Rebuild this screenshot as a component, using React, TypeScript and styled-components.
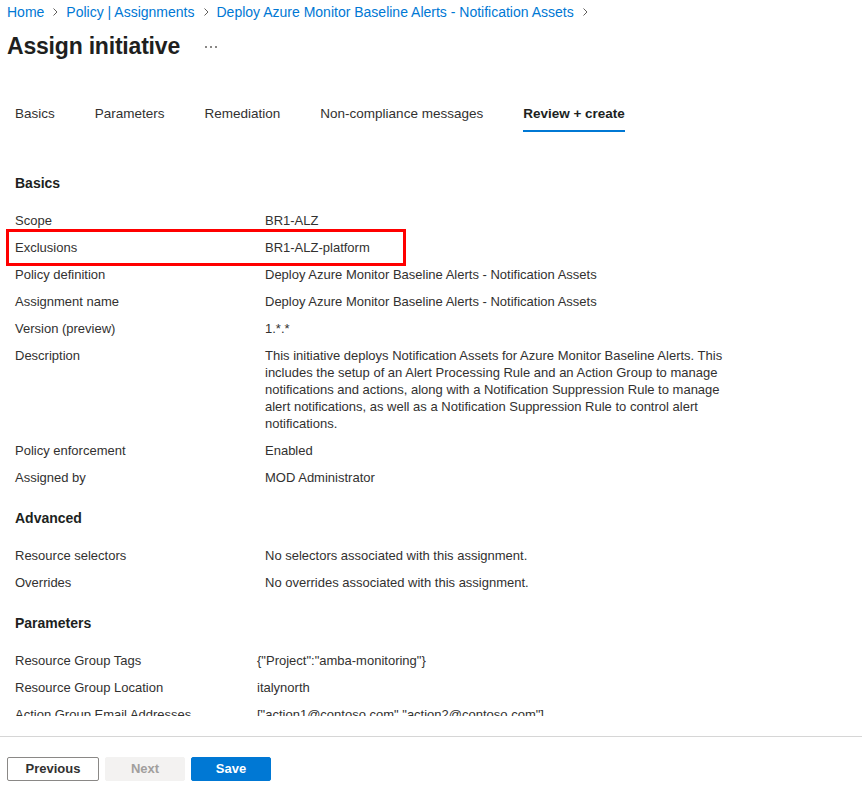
import React from "react";
import styled, { createGlobalStyle } from "styled-components";

const Global = createGlobalStyle`
  html, body { margin: 0; padding: 0; background: #ffffff; }
  body { font-family: "Liberation Sans", Arial, sans-serif; color: #323130; }
  * { box-sizing: border-box; }
`;

const Page = styled.div`
  width: 862px;
  height: 787px;
  display: flex;
  flex-direction: column;
  overflow: hidden;
`;

const Breadcrumb = styled.nav`
  display: flex;
  align-items: center;
  gap: 7px;
  padding: 3px 0 0 7px;
  height: 21px;
  font-size: 14px;
  line-height: 18px;
`;

const Crumb = styled.a`
  color: #0078d4;
  text-decoration: none;
  white-space: nowrap;
`;

const Chevron = () => (
  <svg width="8" height="10" viewBox="0 0 8 10" aria-hidden="true">
    <path d="M2.5 1.5 L6 5 L2.5 8.5" fill="none" stroke="#605e5c" strokeWidth="1" />
  </svg>
);

const TitleRow = styled.div`
  display: flex;
  align-items: center;
  gap: 25px;
  padding: 11px 0 0 7px;
  height: 39px;
`;

const Title = styled.h1`
  margin: 0;
  font-size: 23px;
  line-height: 28px;
  font-weight: 600;
  color: #201f1e;
  letter-spacing: -0.2px;
`;

const More = styled.span`
  display: flex;
  gap: 3px;
  align-items: center;
  padding-top: 2px;
  & > i {
    width: 2px;
    height: 2px;
    background: #8a8886;
    display: block;
  }
`;

const Tabs = styled.div`
  display: flex;
  gap: 40px;
  padding: 45px 0 0 15px;
`;

const Tab = styled.div<{ $active?: boolean }>`
  font-size: 13.5px;
  line-height: 18px;
  padding-bottom: 7px;
  height: 27px;
  color: ${(p) => (p.$active ? "#201f1e" : "#323130")};
  font-weight: ${(p) => (p.$active ? 600 : 400)};
  border-bottom: 2px solid ${(p) => (p.$active ? "#0078d4" : "transparent")};
  white-space: nowrap;
`;

const Content = styled.main`
  flex: 1;
  overflow: hidden;
  padding: 0 0 0 15px;
  margin-bottom: 20px;
`;

const SectionTitle = styled.h2`
  margin: 0 0 14px;
  font-size: 14px;
  line-height: 20px;
  font-weight: 700;
  color: #201f1e;
`;

const Section = styled.section`
  padding-top: 17px;
  &:first-child {
    padding-top: 41px;
  }
`;

const Row = styled.div<{ $labelWidth: number }>`
  position: relative;
  display: grid;
  grid-template-columns: ${(p) => p.$labelWidth}px 460px;
  font-size: 13px;
  line-height: 17px;
  padding: 5px 0;
`;

const Label = styled.div`
  color: #323130;
  white-space: nowrap;
`;

const Value = styled.div`
  color: #323130;
`;

const Highlight = styled.div`
  position: absolute;
  left: -9px;
  top: -5px;
  width: 400px;
  height: 37px;
  border: 3px solid #ff0000;
  pointer-events: none;
`;

const Footer = styled.footer`
  border-top: 1px solid #d6d6d6;
  padding: 20px 7px 6px;
  display: flex;
  gap: 6px;
`;

const Button = styled.button<{ $variant: "default" | "disabled" | "primary" }>`
  height: 24px;
  font-family: inherit;
  font-size: 13px;
  line-height: 16px;
  font-weight: 600;
  border-radius: 2px;
  padding: 0;
  cursor: ${(p) => (p.$variant === "disabled" ? "default" : "pointer")};
  width: ${(p) => (p.$variant === "default" ? 92 : 80)}px;
  border: 1px solid
    ${(p) =>
      p.$variant === "default" ? "#8a8886" : p.$variant === "primary" ? "#0078d4" : "#f3f2f1"};
  background: ${(p) =>
    p.$variant === "primary" ? "#0078d4" : p.$variant === "disabled" ? "#f3f2f1" : "#ffffff"};
  color: ${(p) =>
    p.$variant === "primary" ? "#ffffff" : p.$variant === "disabled" ? "#a19f9d" : "#323130"};
`;

type Item = { label: string; value: string; highlight?: boolean };

const basics: Item[] = [
  { label: "Scope", value: "BR1-ALZ" },
  { label: "Exclusions", value: "BR1-ALZ-platform", highlight: true },
  { label: "Policy definition", value: "Deploy Azure Monitor Baseline Alerts - Notification Assets" },
  { label: "Assignment name", value: "Deploy Azure Monitor Baseline Alerts - Notification Assets" },
  { label: "Version (preview)", value: "1.*.*" },
  {
    label: "Description",
    value:
      "This initiative deploys Notification Assets for Azure Monitor Baseline Alerts. This includes the setup of an Alert Processing Rule and an Action Group to manage notifications and actions, along with a Notification Suppression Rule to manage alert notifications, as well as a Notification Suppression Rule to control alert notifications.",
  },
  { label: "Policy enforcement", value: "Enabled" },
  { label: "Assigned by", value: "MOD Administrator" },
];

const advanced: Item[] = [
  { label: "Resource selectors", value: "No selectors associated with this assignment." },
  { label: "Overrides", value: "No overrides associated with this assignment." },
];

const parameters: Item[] = [
  { label: "Resource Group Tags", value: '{"Project":"amba-monitoring"}' },
  { label: "Resource Group Location", value: "italynorth" },
  { label: "Action Group Email Addresses", value: '["action1@contoso.com","action2@contoso.com"]' },
];

const sections: { title: string; items: Item[]; labelWidth: number }[] = [
  { title: "Basics", items: basics, labelWidth: 250 },
  { title: "Advanced", items: advanced, labelWidth: 250 },
  { title: "Parameters", items: parameters, labelWidth: 242 },
];

export default function App() {
  return (
    <>
      <Global />
      <Page>
        <Breadcrumb>
          <Crumb>Home</Crumb>
          <Chevron />
          <Crumb>Policy | Assignments</Crumb>
          <Chevron />
          <Crumb>Deploy Azure Monitor Baseline Alerts - Notification Assets</Crumb>
          <Chevron />
        </Breadcrumb>
        <TitleRow>
          <Title>Assign initiative</Title>
          <More>
            <i />
            <i />
            <i />
          </More>
        </TitleRow>
        <Tabs>
          <Tab>Basics</Tab>
          <Tab>Parameters</Tab>
          <Tab>Remediation</Tab>
          <Tab>Non-compliance messages</Tab>
          <Tab $active>Review + create</Tab>
        </Tabs>
        <Content>
          {sections.map((s) => (
            <Section key={s.title}>
              <SectionTitle>{s.title}</SectionTitle>
              {s.items.map((it) => (
                <Row key={it.label} $labelWidth={s.labelWidth}>
                  {it.highlight && <Highlight />}
                  <Label>{it.label}</Label>
                  <Value>{it.value}</Value>
                </Row>
              ))}
            </Section>
          ))}
        </Content>
        <Footer>
          <Button $variant="default">Previous</Button>
          <Button $variant="disabled">Next</Button>
          <Button $variant="primary">Save</Button>
        </Footer>
      </Page>
    </>
  );
}
